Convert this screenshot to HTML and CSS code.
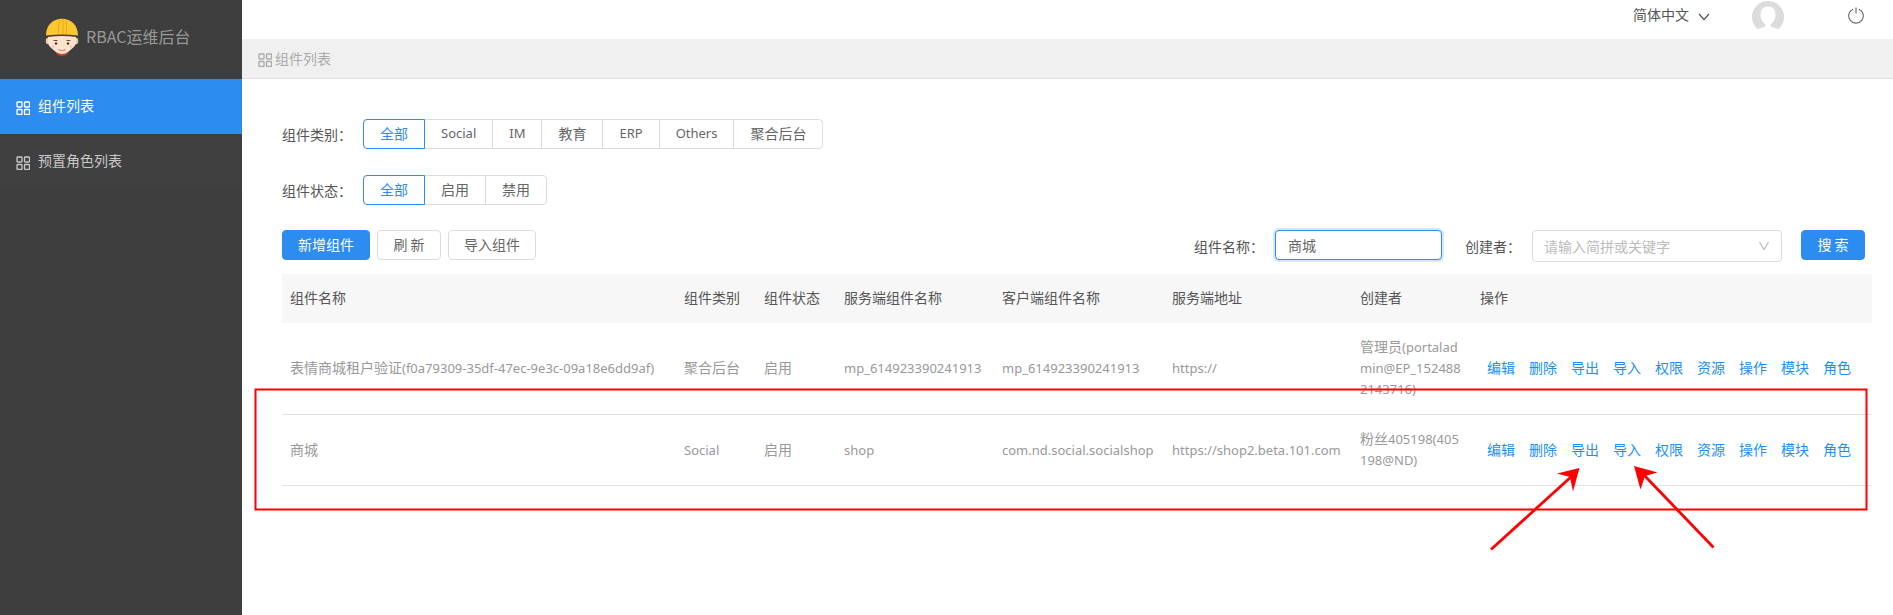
FILE: index.html
```html
<!DOCTYPE html>
<html lang="zh-CN">
<head>
<meta charset="utf-8">
<meta name="viewport" content="width=device-width, initial-scale=1">
<title>RBAC运维后台</title>
<link rel="stylesheet" href="styles.css">
</head>
<body>
<svg class="sprite" aria-hidden="true">
  <symbol id="grid" viewBox="0 0 14 14">
    <g fill="none" stroke="currentColor" stroke-width="1.3">
      <rect x="1" y="1" width="5" height="5" rx="0.8"/>
      <rect x="8.5" y="1" width="5" height="5" rx="0.8"/>
      <rect x="1" y="8.5" width="5" height="5" rx="0.8"/>
      <rect x="8.5" y="8.5" width="5" height="5" rx="0.8"/>
    </g>
  </symbol>
</svg>
<div class="app">
  <aside class="sidebar">
    <div class="brand">
      <svg class="brand-logo" viewBox="0 0 34 38" aria-hidden="true">
        <path d="M10.500 33h13l-1 3q-5.500 4-11 0z" fill="#c8432f"/>
        <ellipse cx="3" cy="23" rx="2.2" ry="3.2" fill="#f2c9a8"/>
        <ellipse cx="31" cy="23" rx="2.2" ry="3.2" fill="#f2c9a8"/>
        <path d="M3 17h28v7c0 5-5 7-8 10q-6 4-12 0c-3-3-8-5-8-10z" fill="#fde3cd"/>
        <path d="M3 16.500h28v2.500q-14-2-28 0z" fill="#5a3a28"/>
        <path d="M1 17.500C1 7 8 .8 17 .8S33 7 33 17.500q-16-2-32 0z" fill="#fdc82f"/>
        <path d="M15 2q-2 7-1.500 14M21 2q1 7 0 14M18 1v15" fill="none" stroke="#dba61f" stroke-width="0.900"/>
        <path d="M8.500 22.500h4M21.500 22.500h4" stroke="#6b4a3a" stroke-width="1"/>
        <circle cx="11" cy="25.500" r="1.200" fill="#4a3328"/>
        <circle cx="23" cy="25.500" r="1.200" fill="#4a3328"/>
        <circle cx="8" cy="28.500" r="1.500" fill="#f9c7b4"/>
        <circle cx="26" cy="28.500" r="1.500" fill="#f9c7b4"/>
        <path d="M13.500 31.500q3.500 2.500 7 0" fill="none" stroke="#e58a7a" stroke-width="1.200"/>
      </svg>
      <span class="brand-name">RBAC运维后台</span>
    </div>
    <nav class="menu">
      <a class="menu-item active" href="#components"><svg class="grid-icon"><use href="#grid"/></svg><span>组件列表</span></a>
      <a class="menu-item" href="#roles"><svg class="grid-icon"><use href="#grid"/></svg><span>预置角色列表</span></a>
    </nav>
  </aside>

  <div class="content">
    <header class="topbar">
      <button class="lang" type="button">简体中文
        <svg class="lang-arrow" viewBox="0 0 12 8" aria-hidden="true"><path d="M1 1l5 5.500L11 1" fill="none" stroke="currentColor" stroke-width="1.200"/></svg>
      </button>
      <svg class="avatar" viewBox="0 0 32 32" role="img" aria-label="用户头像">
        <path d="M5.500 28A16 16 0 1 1 26.500 28L19 25.500C18.300 24.500 18.500 23.500 19.500 22.500Q23.500 19 23.500 13Q23 5.500 16 5.500T8.500 13Q8.500 19 12.500 22.500C13.500 23.500 13.700 24.500 13 25.500Z" fill="#dcdcdc"/>
      </svg>
      <button class="power" type="button" aria-label="退出">
        <svg viewBox="0 0 16 17" aria-hidden="true"><path d="M5 2.200A7.300 7.300 0 1 0 11 2.200M8 .5v6" fill="none" stroke="currentColor" stroke-width="1.100"/></svg>
      </button>
    </header>

    <div class="crumb"><svg class="grid-icon"><use href="#grid"/></svg><span>组件列表</span></div>

    <main class="main">
      <div class="filter">
        <span class="label" id="kind">组件类别<span class="colon">：</span></span>
        <div class="group" role="group" aria-labelledby="kind">
          <button class="seg on" type="button">全部</button><button class="seg latin" type="button">Social</button><button class="seg latin" type="button">IM</button><button class="seg" type="button">教育</button><button class="seg latin" type="button">ERP</button><button class="seg latin" type="button">Others</button><button class="seg" type="button">聚合后台</button>
        </div>
      </div>
      <div class="filter">
        <span class="label" id="state">组件状态<span class="colon">：</span></span>
        <div class="group" role="group" aria-labelledby="state">
          <button class="seg on" type="button">全部</button><button class="seg" type="button">启用</button><button class="seg" type="button">禁用</button>
        </div>
      </div>

      <div class="toolbar">
        <div class="actions">
          <button class="btn primary" type="button">新增组件</button>
          <button class="btn" type="button">刷 新</button>
          <button class="btn" type="button">导入组件</button>
        </div>
        <form class="search">
          <label class="label" for="name">组件名称<span class="colon">：</span></label>
          <input class="text-input" id="name" type="text" value="商城">
          <label class="label creator-label" for="creator">创建者<span class="colon">：</span></label>
          <div class="select-wrap">
            <select class="select" id="creator"><option>请输入简拼或关键字</option></select>
            <svg class="select-arrow" viewBox="0 0 12 10" aria-hidden="true"><path d="M1.500 1L6 8.500 10.500 1" fill="none" stroke="currentColor" stroke-width="1.200"/></svg>
          </div>
          <button class="btn primary" type="button">搜 索</button>
        </form>
      </div>

      <table class="table">
        <colgroup>
          <col><col class="c-kind"><col class="c-kind"><col class="c-server"><col class="c-client"><col class="c-url"><col class="c-creator"><col class="c-ops">
        </colgroup>
        <thead>
          <tr><th>组件名称</th><th>组件类别</th><th>组件状态</th><th>服务端组件名称</th><th>客户端组件名称</th><th>服务端地址</th><th>创建者</th><th>操作</th></tr>
        </thead>
        <tbody>
          <tr>
            <td>表情商城租户验证<span class="latin">(f0a79309-35df-47ec-9e3c-09a18e6dd9af)</span></td>
            <td>聚合后台</td><td>启用</td>
            <td><span class="latin">mp_614923390241913</span></td>
            <td><span class="latin">mp_614923390241913</span></td>
            <td><span class="latin">https://</span></td>
            <td class="creator">管理员<span class="latin">(portaladmin@EP_1524882143716)</span></td>
            <td><div class="ops"><a href="#edit">编辑</a><a href="#delete">删除</a><a href="#export">导出</a><a href="#import">导入</a><a href="#auth">权限</a><a href="#resource">资源</a><a href="#operate">操作</a><a href="#module">模块</a><a href="#role">角色</a></div></td>
          </tr>
          <tr>
            <td>商城</td>
            <td><span class="latin">Social</span></td><td>启用</td>
            <td><span class="latin">shop</span></td>
            <td><span class="latin">com.nd.social.socialshop</span></td>
            <td><span class="latin">https://shop2.beta.101.com</span></td>
            <td class="creator">粉丝<span class="latin">405198(405198@ND)</span></td>
            <td><div class="ops"><a href="#edit">编辑</a><a href="#delete">删除</a><a href="#export">导出</a><a href="#import">导入</a><a href="#auth">权限</a><a href="#resource">资源</a><a href="#operate">操作</a><a href="#module">模块</a><a href="#role">角色</a></div></td>
          </tr>
        </tbody>
      </table>
    </main>
  </div>
</div>
<svg class="marks" width="1893" height="560" aria-hidden="true">
  <rect x="255.500" y="389.500" width="1611" height="120" fill="none" stroke="#f00" stroke-width="2"/>
  <g stroke="#f00" stroke-width="2.800">
    <path d="M1491 549.500L1572 476"/>
    <path d="M1713.500 547.500L1643 474"/>
  </g>
  <g fill="#f00">
    <path d="M1579.500 468L1557 473.500 1570 477 1573 491.500z"/>
    <path d="M1634 466L1657.500 472.500 1645 476 1640.500 489.500z"/>
  </g>
</svg>
</body>
</html>
```
FILE: styles.css
```css
* { box-sizing: border-box; }

body {
  margin: 0;
  font-family: "Noto Sans CJK SC", sans-serif;
  font-size: 14px;
  font-weight: 400;
  line-height: 21px;
  color: #555;
  background: #fff;
}

a { text-decoration: none; }
button, input, select { font: inherit; color: inherit; }
button { cursor: pointer; }

.sprite { position: absolute; width: 0; height: 0; }

.latin { font-family: "Noto Sans", "Open Sans", sans-serif; font-size: 13px; line-height: 1; }
.colon { font-family: "Noto Sans CJK TC", sans-serif; line-height: 1; }
.grid-icon { width: 14px; height: 14px; flex: none; }

.app { display: flex; min-height: 100vh; }

.sidebar { width: 242px; flex: none; background: #3e3e3e; }
.brand {
  display: flex;
  align-items: center;
  gap: 7px;
  height: 79px;
  padding: 0 0 6px 45px;
}
.brand-logo { width: 34px; height: 38px; }
.brand-name { font-size: 16px; color: #999; }

.menu-item {
  display: flex;
  align-items: center;
  gap: 8px;
  height: 55px;
  padding: 0 0 2px 16px;
  color: #c8c8c8;
  background: #404040;
}
.menu-item .grid-icon { margin-top: 4px; }
.menu-item.active { background: #2d8cf0; color: #fff; }

.content { flex: 1; min-width: 0; }

.topbar {
  display: flex;
  justify-content: flex-end;
  align-items: flex-start;
  height: 39px;
  padding-right: 29px;
}
.lang {
  display: flex;
  align-items: center;
  gap: 9px;
  margin: 4px 42px 0 0;
  padding: 0;
  border: 0;
  background: none;
  color: #555;
}
.lang-arrow { width: 12px; height: 8px; margin-top: 4px; }
.avatar { width: 32px; height: 32px; margin: 1px 64px 0 0; }
.power { display: flex; margin-top: 7px; padding: 0; border: 0; background: none; color: #666; }
.power svg { width: 16px; height: 17px; }

.crumb {
  display: flex;
  align-items: center;
  gap: 3px;
  height: 40px;
  padding-left: 16px;
  border-bottom: 1px solid #e0e0e0;
  background: #f0f0f0;
  color: #aaa;
}
.crumb .grid-icon { margin-top: 3px; }

.main { padding: 40px 21px 0 40px; }

.filter { display: flex; align-items: center; gap: 11px; margin-bottom: 26px; }
.label { color: #555; white-space: nowrap; }

.group { display: flex; }
.seg {
  height: 30px;
  margin-left: -1px;
  padding: 0 16px 1px;
  border: 1px solid #dcdcdc;
  background: #fff;
  color: #666;
  white-space: nowrap;
}
.seg:first-child { margin-left: 0; border-radius: 4px 0 0 4px; }
.seg:last-child { border-radius: 0 4px 4px 0; }
.seg.on { z-index: 1; border-color: #2d8cf0; color: #2d8cf0; }

.toolbar {
  display: flex;
  justify-content: space-between;
  align-items: flex-start;
  margin: -1px 7px 12px 0;
}
.actions { display: flex; gap: 7px; }
.btn {
  min-width: 64px;
  height: 30px;
  padding: 0 15px 1px;
  border: 1px solid #dcdcdc;
  border-radius: 4px;
  background: #fff;
  color: #666;
  text-align: center;
  white-space: nowrap;
}
.actions .btn { padding-bottom: 2px; }
.btn.primary { border-color: #2d8cf0; background: #2d8cf0; color: #fff; }

.search { display: flex; align-items: flex-start; }
.search .label { margin: 6px 11px 0 0; }
.search .creator-label { margin-left: 23px; }
.text-input {
  width: 167px;
  height: 30px;
  padding: 0 12px;
  border: 1px solid #2d8cf0;
  border-radius: 4px;
  outline: 0;
  box-shadow: 0 0 0 2px #d5e8fc;
  color: #666;
}
.select-wrap { position: relative; margin-right: 19px; }
.select {
  display: block;
  width: 250px;
  height: 32px;
  padding: 0 11px;
  border: 1px solid #dcdcdc;
  border-radius: 4px;
  background: #fff;
  color: #bbb;
  appearance: none;
}
.select-arrow {
  position: absolute;
  top: 11px;
  right: 12px;
  width: 12px;
  height: 10px;
  color: #bbb;
  pointer-events: none;
}

.table { width: 100%; table-layout: fixed; border-collapse: separate; border-spacing: 0; }
.table th, .table td { padding: 13px 8px 15px; text-align: left; font-weight: 400; }
.table th { background: #f7f7f7; color: #555; }
.table td { border-bottom: 1px solid #e3e3e3; color: #999; }
.creator { word-break: break-all; }
.c-kind { width: 80px; }
.c-server { width: 158px; }
.c-client { width: 170px; }
.c-url { width: 188px; }
.c-creator { width: 120px; }
.c-ops { width: 400px; }
.ops { display: flex; }
.ops a { padding: 0 7px; color: #1890ff; }

.marks { position: absolute; top: 0; left: 0; pointer-events: none; }
```
